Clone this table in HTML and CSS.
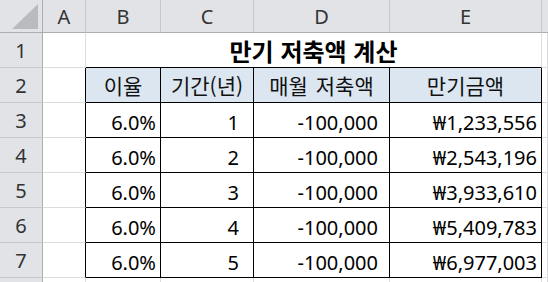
FILE: index.html
```html
<!DOCTYPE html>
<html lang="ko">
<head>
<meta charset="utf-8">
<link rel="stylesheet" href="styles.css">
</head>
<body>
<div class="sheet">
  <div class="h corner"><span class="tri"></span></div>
  <div class="h col">A</div>
  <div class="h col">B</div>
  <div class="h col">C</div>
  <div class="h col">D</div>
  <div class="h col last">E</div>
  <div class="h col edge"></div>

  <div class="h row">1</div>
  <div class="c"></div>
  <div class="c title">만기 저축액 계산</div>
  <div class="c"></div>

  <div class="h row">2</div>
  <div class="c bl"></div>
  <div class="c t th">이율</div>
  <div class="c t th">기간(년)</div>
  <div class="c t th">매월 저축액</div>
  <div class="c t th">만기금액</div>
  <div class="c"></div>

  <div class="h row">3</div>
  <div class="c bl"></div>
  <div class="c t n">6.0%</div>
  <div class="c t n sp-c">1</div>
  <div class="c t n sp-d">-100,000</div>
  <div class="c t n">₩1,233,556</div>
  <div class="c"></div>

  <div class="h row">4</div>
  <div class="c bl"></div>
  <div class="c t n">6.0%</div>
  <div class="c t n sp-c">2</div>
  <div class="c t n sp-d">-100,000</div>
  <div class="c t n">₩2,543,196</div>
  <div class="c"></div>

  <div class="h row">5</div>
  <div class="c bl"></div>
  <div class="c t n">6.0%</div>
  <div class="c t n sp-c">3</div>
  <div class="c t n sp-d">-100,000</div>
  <div class="c t n">₩3,933,610</div>
  <div class="c"></div>

  <div class="h row">6</div>
  <div class="c bl"></div>
  <div class="c t n">6.0%</div>
  <div class="c t n sp-c">4</div>
  <div class="c t n sp-d">-100,000</div>
  <div class="c t n">₩5,409,783</div>
  <div class="c"></div>

  <div class="h row">7</div>
  <div class="c bl"></div>
  <div class="c t n">6.0%</div>
  <div class="c t n sp-c">5</div>
  <div class="c t n sp-d">-100,000</div>
  <div class="c t n">₩6,977,003</div>
  <div class="c"></div>

  <div class="h row"></div>
  <div class="c"></div>
  <div class="c"></div>
  <div class="c"></div>
  <div class="c"></div>
  <div class="c"></div>
  <div class="c"></div>
</div>
</body>
</html>
```

FILE: styles.css
```css
html, body {
  margin: 0;
  padding: 0;
  background: #ffffff;
}

body {
  width: 548px;
  height: 282px;
  overflow: hidden;
  font-family: "Noto Sans", "Noto Sans CJK KR", sans-serif;
  font-size: 20px;
  color: #000;
}

.sheet {
  display: grid;
  grid-template-columns: 43px 43px 75px 93px 136px 152px 6px;
  grid-template-rows: 33px repeat(7, 35px) 10px;
}

.sheet > div {
  box-sizing: border-box;
  border-right: 1px solid #dadcdd;
  border-bottom: 1px solid #dadcdd;
  display: flex;
  align-items: center;
  min-width: 0;
  overflow: hidden;
  white-space: nowrap;
}

.h {
  background: #e1e3e7;
  color: #333;
  font-size: 20px;
  justify-content: center;
}

.sheet > .col {
  border-right: 1px solid #c6c8cb;
  border-bottom: 1px solid #abadb0;
}

.sheet > .col.edge {
  border-right: none;
}

.sheet > .row {
  border-right: 1px solid #abadb0;
  border-bottom: 1px solid #c6c8cb;
}

.sheet > .corner {
  border-right: 1px solid #abadb0;
  border-bottom: 1px solid #abadb0;
  position: relative;
}

.tri {
  position: absolute;
  left: 12px;
  top: 4px;
  width: 26px;
  height: 25px;
  background: #b9bbbe;
  clip-path: polygon(100% 0, 100% 100%, 0 100%);
}

.sheet > .title {
  grid-column: span 4;
  justify-content: center;
  font-family: "Noto Sans CJK KR", sans-serif;
  font-weight: 700;
  font-size: 24px;
  border-bottom: 1px solid #000;
  border-right: 1px solid #dadcdd;
  padding-top: 1px;
}

.sheet > .bl {
  border-right: 1px solid #000;
}

.sheet > .t {
  border-right: 1px solid #000;
  border-bottom: 1px solid #000;
}

.th {
  background: #dce6f1;
  justify-content: center;
  color: #111;
  font-family: "Noto Sans CJK KR", sans-serif;
  font-size: 21px;
  word-spacing: 2px;
}

.n {
  justify-content: flex-end;
  padding-right: 4px;
  padding-top: 4px;
}

.sheet > .sp-c {
  padding-right: 14px;
}

.sheet > .sp-d {
  padding-right: 11px;
}
```
